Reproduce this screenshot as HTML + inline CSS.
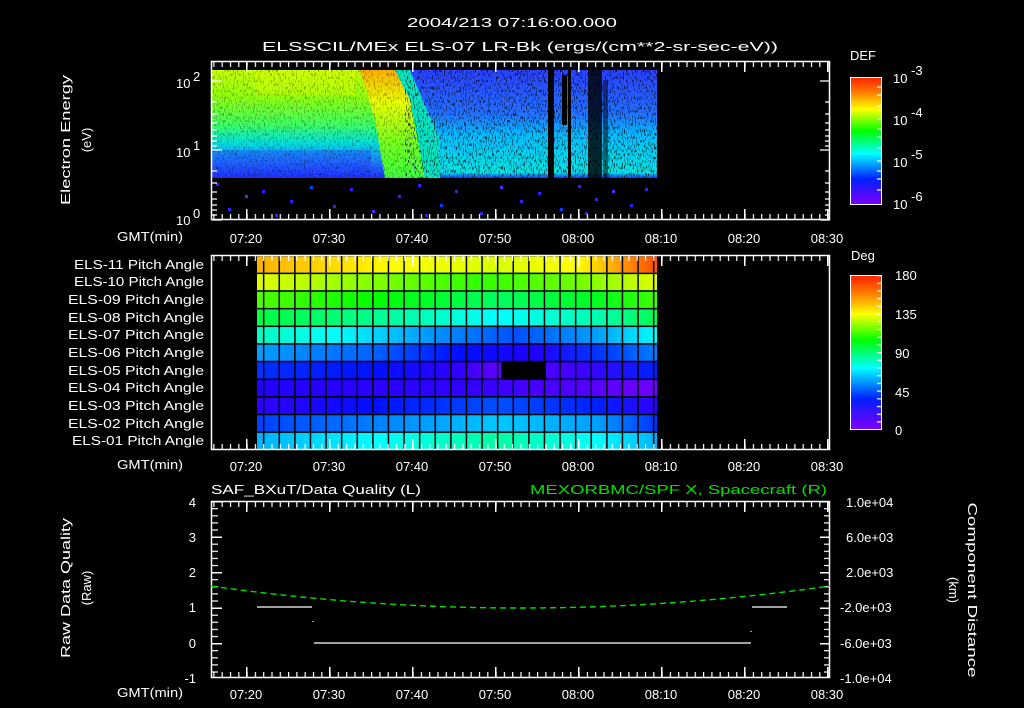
<!DOCTYPE html>
<html><head><meta charset="utf-8"><style>
html,body{margin:0;padding:0;background:#000;width:1024px;height:708px;overflow:hidden}
svg{display:block}
text{font-family:"Liberation Sans",sans-serif;fill:#fff;font-size:13px}
</style></head><body>
<svg width="1024" height="708" viewBox="0 0 1024 708" xmlns="http://www.w3.org/2000/svg">
<defs>
<linearGradient id="cb" x1="0" y1="0" x2="0" y2="1">
<stop offset="0" stop-color="#ff2000"/><stop offset="0.12" stop-color="#ff8000"/><stop offset="0.25" stop-color="#ffff00"/><stop offset="0.42" stop-color="#00ff00"/><stop offset="0.6" stop-color="#00ffff"/><stop offset="0.8" stop-color="#0020ff"/><stop offset="1" stop-color="#8000ff"/>
</linearGradient>
<linearGradient id="lg" x1="0" y1="0" x2="0" y2="1">
<stop offset="0" stop-color="#c8ff00"/><stop offset="0.25" stop-color="#90ff10"/><stop offset="0.5" stop-color="#40ff60"/><stop offset="0.68" stop-color="#00e0e0"/><stop offset="0.85" stop-color="#2080ff"/><stop offset="1" stop-color="#2030ff"/>
</linearGradient>
<linearGradient id="rg" x1="0" y1="0" x2="0" y2="1">
<stop offset="0" stop-color="#2840ff"/><stop offset="0.4" stop-color="#2070ff"/><stop offset="0.6" stop-color="#00c0ff"/><stop offset="0.95" stop-color="#00e8e0"/><stop offset="1" stop-color="#2030ff"/>
</linearGradient>
<linearGradient id="yb" x1="0" y1="0" x2="0" y2="1">
<stop offset="0" stop-color="#ffb000"/><stop offset="0.3" stop-color="#e8ff00"/><stop offset="0.7" stop-color="#70ff20"/><stop offset="1" stop-color="#40ff40"/>
</linearGradient>
<filter id="nz" x="0" y="0" width="1" height="1">
<feTurbulence type="fractalNoise" baseFrequency="0.9 0.3" numOctaves="1" seed="4"/>
<feColorMatrix type="matrix" values="0 0 0 0 0  0 0 0 0 0  0 0 0 0 0  10 0 0 0 -5.5"/>
</filter>
<filter id="nz2" x="0" y="0" width="1" height="1">
<feTurbulence type="fractalNoise" baseFrequency="0.9 0.25" numOctaves="1" seed="9"/>
<feColorMatrix type="matrix" values="0 0 0 0 0.1  0 0 0 0 0.1  0 0 0 0 1  8 0 0 0 -4.8"/>
</filter>
<pattern id="tmin" patternUnits="userSpaceOnUse" x="246.5" y="0" width="8.3" height="708"><rect x="0" y="0" width="1.2" height="708" fill="#fff"/></pattern>
<pattern id="tmaj" patternUnits="userSpaceOnUse" x="246" y="0" width="83" height="708"><rect x="0" y="0" width="1.5" height="708" fill="#fff"/></pattern>
<pattern id="grid" patternUnits="userSpaceOnUse" x="278.5" y="255" width="15.6" height="17.64"><rect x="0" y="0" width="1.5" height="17.64" fill="#000"/><rect x="0" y="0" width="15.6" height="1.5" fill="#000"/></pattern>
<pattern id="ymin" patternUnits="userSpaceOnUse" x="0" y="501" width="10" height="7.1"><rect x="0" y="0" width="10" height="1.2" fill="#fff"/></pattern>
<pattern id="ymaj" patternUnits="userSpaceOnUse" x="0" y="501" width="10" height="35.5"><rect x="0" y="0" width="10" height="1.5" fill="#fff"/></pattern>
<pattern id="cbt" patternUnits="userSpaceOnUse" x="0" y="275" width="10" height="7.7"><rect x="0" y="0" width="10" height="1.2" fill="#fff"/></pattern>
</defs>

<text x="512" y="27" text-anchor="middle" font-size="15" textLength="210" lengthAdjust="spacingAndGlyphs">2004/213 07:16:00.000</text>
<text x="520" y="51" text-anchor="middle" font-size="15" textLength="516" lengthAdjust="spacingAndGlyphs">ELSSCIL/MEx ELS-07 LR-Bk  (ergs/(cm**2-sr-sec-eV))</text>

<!-- TOP PANEL -->
<rect x="211" y="70" width="180" height="108" fill="url(#lg)"/>
<rect x="405" y="70" width="252" height="108" fill="url(#rg)"/>
<polygon points="360,70 400,70 415,100 430,178 385,178 375,120" fill="url(#yb)"/>
<polygon points="395,70 410,70 440,140 440,178 425,178 410,100" fill="#00e8c0"/>
<rect x="255" y="70" width="100" height="25" fill="#e0ff00" opacity="0.35"/>
<rect x="211" y="150" width="160" height="28" fill="#2030ff" opacity="0.35"/>
<rect x="211" y="70" width="200" height="108" filter="url(#nz)" opacity="0.3"/>
<rect x="405" y="70" width="252" height="108" filter="url(#nz)" opacity="0.7"/>
<rect x="405" y="70" width="252" height="108" filter="url(#nz2)" opacity="0.6"/>
<rect x="548" y="70" width="6" height="108" fill="#000"/>
<rect x="562" y="75" width="5" height="50" fill="#000"/>
<rect x="568" y="70" width="3" height="108" fill="#000"/>
<rect x="588" y="70" width="14" height="108" fill="#000" opacity="0.8"/>
<rect x="603" y="80" width="5" height="98" fill="#000" opacity="0.5"/>
<g fill="#3020ff">
<rect x="216" y="183" width="3" height="3"/><rect x="245" y="195" width="3" height="3" fill="#6020ff"/><rect x="262" y="190" width="3" height="3"/><rect x="290" y="200" width="3" height="3"/><rect x="310" y="186" width="3" height="3" fill="#0040ff"/><rect x="333" y="205" width="3" height="3"/><rect x="350" y="188" width="3" height="3"/><rect x="372" y="210" width="3" height="3" fill="#6020ff"/><rect x="398" y="195" width="3" height="3"/><rect x="418" y="184" width="3" height="3"/><rect x="440" y="204" width="3" height="3" fill="#0040ff"/><rect x="455" y="190" width="3" height="3"/><rect x="480" y="212" width="3" height="3"/><rect x="500" y="186" width="3" height="3" fill="#6020ff"/><rect x="520" y="200" width="3" height="3"/><rect x="538" y="192" width="3" height="3"/><rect x="560" y="208" width="3" height="3" fill="#0040ff"/><rect x="578" y="185" width="3" height="3"/><rect x="595" y="198" width="3" height="3"/><rect x="612" y="190" width="3" height="3" fill="#6020ff"/><rect x="630" y="204" width="3" height="3"/><rect x="645" y="188" width="3" height="3"/><rect x="228" y="208" width="3" height="3"/><rect x="275" y="214" width="3" height="3"/><rect x="425" y="214" width="3" height="3"/><rect x="585" y="212" width="3" height="3"/>
</g>
<rect x="211.5" y="61.5" width="618" height="158" fill="none" stroke="#fff" stroke-width="1.5"/>
<rect x="211" y="62" width="619" height="5" fill="url(#tmin)"/>
<rect x="211" y="62" width="619" height="10" fill="url(#tmaj)"/>
<rect x="211" y="214" width="619" height="5" fill="url(#tmin)"/>
<rect x="211" y="209" width="619" height="10" fill="url(#tmaj)"/>
<g stroke="#fff" stroke-width="1.2">
<path d="M212 81h10M212 150h10M212 220h10M820 81h10M820 150h10M820 220h10"/>
<path d="M212 102h5M212 114h5M212 123h5M212 130h5M212 136h5M212 141h5M212 146h5M212 171h5M212 183h5M212 192h5M212 199h5M212 205h5M212 210h5M212 215h5"/>
<path d="M825 102h5M825 114h5M825 123h5M825 130h5M825 136h5M825 141h5M825 146h5M825 171h5M825 183h5M825 192h5M825 199h5M825 205h5M825 210h5M825 215h5"/>
</g>
<text x="176" y="88" font-size="15">10</text><text x="193" y="81" font-size="11">2</text>
<text x="176" y="157" font-size="15">10</text><text x="193" y="150" font-size="11">1</text>
<text x="176" y="225" font-size="15">10</text><text x="193" y="218" font-size="11">0</text>
<text transform="translate(70,140) rotate(-90)" text-anchor="middle" font-size="14" textLength="130" lengthAdjust="spacingAndGlyphs">Electron Energy</text>
<text transform="translate(91,140) rotate(-90)" text-anchor="middle" font-size="14">(eV)</text>
<text x="117" y="241" font-size="13" textLength="66" lengthAdjust="spacingAndGlyphs">GMT(min)</text>
<g font-size="13" text-anchor="middle">
<text x="246" y="243">07:20</text><text x="329" y="243">07:30</text><text x="412" y="243">07:40</text><text x="495" y="243">07:50</text><text x="578" y="243">08:00</text><text x="661" y="243">08:10</text><text x="744" y="243">08:20</text><text x="827" y="243">08:30</text>
</g>
<text x="850" y="60" font-size="15">DEF</text>
<rect x="850.5" y="77.5" width="31" height="127" fill="url(#cb)" stroke="#fff" stroke-width="1"/>
<g stroke="#fff" stroke-width="1.2"><path d="M877 87h5M877 95h5M877 106h5M877 119h5M877 129h5M877 137h5M877 148h5M877 161h5M877 171h5M877 179h5M877 190h5"/></g>
<g font-size="15"><text x="893" y="83">10</text><text x="911" y="75" font-size="11">-3</text>
<text x="893" y="125">10</text><text x="911" y="117" font-size="11">-4</text>
<text x="893" y="167">10</text><text x="911" y="159" font-size="11">-5</text>
<text x="893" y="209">10</text><text x="911" y="201" font-size="11">-6</text></g>

<!-- MIDDLE PANEL -->
<defs>
<linearGradient id="r1"><stop offset="0" stop-color="#ffb000"/><stop offset="0.35" stop-color="#ffff00"/><stop offset="0.6" stop-color="#d8ff00"/><stop offset="0.8" stop-color="#ffff00"/><stop offset="0.92" stop-color="#ff9000"/><stop offset="1" stop-color="#ff5000"/></linearGradient>
<linearGradient id="r2"><stop offset="0" stop-color="#e0ff00"/><stop offset="0.3" stop-color="#80ff00"/><stop offset="0.55" stop-color="#30ff00"/><stop offset="0.8" stop-color="#70ff00"/><stop offset="1" stop-color="#e0ff00"/></linearGradient>
<linearGradient id="r3"><stop offset="0" stop-color="#50ff00"/><stop offset="0.3" stop-color="#00ff00"/><stop offset="0.6" stop-color="#00ff60"/><stop offset="0.85" stop-color="#00ff20"/><stop offset="1" stop-color="#40ff00"/></linearGradient>
<linearGradient id="r4"><stop offset="0" stop-color="#00ff40"/><stop offset="0.3" stop-color="#00ff90"/><stop offset="0.6" stop-color="#00ffff"/><stop offset="0.85" stop-color="#00ffb0"/><stop offset="1" stop-color="#00ff50"/></linearGradient>
<linearGradient id="r5"><stop offset="0" stop-color="#00ffc0"/><stop offset="0.2" stop-color="#00ffff"/><stop offset="0.45" stop-color="#0090ff"/><stop offset="0.65" stop-color="#0050ff"/><stop offset="0.85" stop-color="#00a0ff"/><stop offset="1" stop-color="#00ffff"/></linearGradient>
<linearGradient id="r6"><stop offset="0" stop-color="#00a0ff"/><stop offset="0.3" stop-color="#0060ff"/><stop offset="0.5" stop-color="#0010ff"/><stop offset="0.7" stop-color="#2000ff"/><stop offset="0.88" stop-color="#0040ff"/><stop offset="1" stop-color="#0080ff"/></linearGradient>
<linearGradient id="r7"><stop offset="0" stop-color="#0030ff"/><stop offset="0.3" stop-color="#0010ff"/><stop offset="0.5" stop-color="#3000ff"/><stop offset="0.6" stop-color="#6000ff"/><stop offset="0.8" stop-color="#4000ff"/><stop offset="1" stop-color="#0020ff"/></linearGradient>
<linearGradient id="r8"><stop offset="0" stop-color="#2000ff"/><stop offset="0.5" stop-color="#3000ff"/><stop offset="0.8" stop-color="#5000ff"/><stop offset="1" stop-color="#7000ff"/></linearGradient>
<linearGradient id="r9"><stop offset="0" stop-color="#3000ff"/><stop offset="0.3" stop-color="#0010ff"/><stop offset="0.6" stop-color="#0050ff"/><stop offset="0.85" stop-color="#0020ff"/><stop offset="1" stop-color="#3000ff"/></linearGradient>
<linearGradient id="r10"><stop offset="0" stop-color="#0040ff"/><stop offset="0.3" stop-color="#0080ff"/><stop offset="0.6" stop-color="#00c8ff"/><stop offset="0.85" stop-color="#00a0ff"/><stop offset="1" stop-color="#0030ff"/></linearGradient>
<linearGradient id="r11"><stop offset="0" stop-color="#00b0ff"/><stop offset="0.3" stop-color="#00ffff"/><stop offset="0.6" stop-color="#00ffa0"/><stop offset="0.85" stop-color="#00ffff"/><stop offset="1" stop-color="#00b0ff"/></linearGradient>
</defs>
<rect x="257" y="255" width="400" height="17.7" fill="url(#r1)"/>
<rect x="257" y="272.6" width="400" height="17.7" fill="url(#r2)"/>
<rect x="257" y="290.3" width="400" height="17.7" fill="url(#r3)"/>
<rect x="257" y="307.9" width="400" height="17.7" fill="url(#r4)"/>
<rect x="257" y="325.6" width="400" height="17.7" fill="url(#r5)"/>
<rect x="257" y="343.2" width="400" height="17.7" fill="url(#r6)"/>
<rect x="257" y="360.8" width="400" height="17.7" fill="url(#r7)"/>
<rect x="257" y="378.5" width="400" height="17.7" fill="url(#r8)"/>
<rect x="257" y="396.1" width="400" height="17.7" fill="url(#r9)"/>
<rect x="257" y="413.8" width="400" height="17.7" fill="url(#r10)"/>
<rect x="257" y="431.4" width="400" height="17.7" fill="url(#r11)"/>
<rect x="501" y="361" width="45" height="17.5" fill="#000"/>
<rect x="257" y="255" width="400" height="195" fill="url(#grid)"/>
<rect x="211.5" y="255.5" width="618" height="194" fill="none" stroke="#fff" stroke-width="1.5"/>
<rect x="211" y="256" width="619" height="5" fill="url(#tmin)"/>
<rect x="211" y="256" width="619" height="10" fill="url(#tmaj)"/>
<rect x="211" y="444" width="619" height="5" fill="url(#tmin)"/>
<rect x="211" y="439" width="619" height="10" fill="url(#tmaj)"/>
<g font-size="12.5" text-anchor="end">
<text x="204" y="269" textLength="130" lengthAdjust="spacingAndGlyphs">ELS-11 Pitch Angle</text>
<text x="204" y="286" textLength="130" lengthAdjust="spacingAndGlyphs">ELS-10 Pitch Angle</text>
<text x="204" y="304" textLength="136" lengthAdjust="spacingAndGlyphs">ELS-09 Pitch Angle</text>
<text x="204" y="322" textLength="136" lengthAdjust="spacingAndGlyphs">ELS-08 Pitch Angle</text>
<text x="204" y="339" textLength="136" lengthAdjust="spacingAndGlyphs">ELS-07 Pitch Angle</text>
<text x="204" y="357" textLength="136" lengthAdjust="spacingAndGlyphs">ELS-06 Pitch Angle</text>
<text x="204" y="375" textLength="136" lengthAdjust="spacingAndGlyphs">ELS-05 Pitch Angle</text>
<text x="204" y="392" textLength="136" lengthAdjust="spacingAndGlyphs">ELS-04 Pitch Angle</text>
<text x="204" y="410" textLength="136" lengthAdjust="spacingAndGlyphs">ELS-03 Pitch Angle</text>
<text x="204" y="428" textLength="136" lengthAdjust="spacingAndGlyphs">ELS-02 Pitch Angle</text>
<text x="204" y="445" textLength="132" lengthAdjust="spacingAndGlyphs">ELS-01 Pitch Angle</text>
</g>
<text x="117" y="469" font-size="13" textLength="66" lengthAdjust="spacingAndGlyphs">GMT(min)</text>
<g font-size="13" text-anchor="middle">
<text x="246" y="471">07:20</text><text x="329" y="471">07:30</text><text x="412" y="471">07:40</text><text x="495" y="471">07:50</text><text x="578" y="471">08:00</text><text x="661" y="471">08:10</text><text x="744" y="471">08:20</text><text x="827" y="471">08:30</text>
</g>
<text x="851" y="260" font-size="15">Deg</text>
<rect x="850.5" y="275.5" width="31" height="154" fill="url(#cb)" stroke="#fff" stroke-width="1"/>
<rect x="877" y="276" width="5" height="153" fill="url(#cbt)"/>
<g font-size="15"><text x="895" y="280">180</text><text x="895" y="319">135</text><text x="895" y="358">90</text><text x="895" y="397">45</text><text x="895" y="435">0</text></g>

<!-- BOTTOM PANEL -->
<text x="211" y="494" font-size="15" textLength="210" lengthAdjust="spacingAndGlyphs">SAF_BXuT/Data Quality (L)</text>
<text x="530" y="494" font-size="15" style="fill:#00e000" textLength="297" lengthAdjust="spacingAndGlyphs">MEXORBMC/SPF X, Spacecraft (R)</text>
<rect x="211.5" y="501.5" width="618" height="176" fill="none" stroke="#fff" stroke-width="1.5"/>
<rect x="211" y="502" width="619" height="5" fill="url(#tmin)"/>
<rect x="211" y="502" width="619" height="10" fill="url(#tmaj)"/>
<rect x="211" y="672" width="619" height="5" fill="url(#tmin)"/>
<rect x="211" y="667" width="619" height="10" fill="url(#tmaj)"/>
<rect x="212" y="501" width="6" height="176" fill="url(#ymin)"/>
<rect x="212" y="501" width="10" height="176" fill="url(#ymaj)"/>
<rect x="824" y="501" width="6" height="176" fill="url(#ymin)"/>
<rect x="820" y="501" width="10" height="176" fill="url(#ymaj)"/>
<path d="M211 586 Q520 630 830 586" fill="none" stroke="#00e000" stroke-width="1.4" stroke-dasharray="6 4"/>
<g stroke="#fff" stroke-width="1.2">
<path d="M257 607h55M314 643h437M752 607h35M313 621v1M751 631v1"/>
</g>
<g font-size="13" text-anchor="end"><text x="196" y="507">4</text><text x="196" y="542">3</text><text x="196" y="577">2</text><text x="196" y="612">1</text><text x="196" y="648">0</text><text x="196" y="683">-1</text></g>
<g font-size="13"><text x="846" y="507">1.0e+04</text><text x="846" y="542">6.0e+03</text><text x="846" y="577">2.0e+03</text><text x="840" y="612">-2.0e+03</text><text x="840" y="648">-6.0e+03</text><text x="840" y="683">-1.0e+04</text></g>
<text transform="translate(70,588) rotate(-90)" text-anchor="middle" font-size="14" textLength="140" lengthAdjust="spacingAndGlyphs">Raw Data Quality</text>
<text transform="translate(91,588) rotate(-90)" text-anchor="middle" font-size="14">(Raw)</text>
<text transform="translate(968,590) rotate(90)" text-anchor="middle" font-size="14" textLength="175" lengthAdjust="spacingAndGlyphs">Component Distance</text>
<text transform="translate(949,590) rotate(90)" text-anchor="middle" font-size="14">(km)</text>
<text x="117" y="697" font-size="13" textLength="66" lengthAdjust="spacingAndGlyphs">GMT(min)</text>
<g font-size="13" text-anchor="middle">
<text x="246" y="699">07:20</text><text x="329" y="699">07:30</text><text x="412" y="699">07:40</text><text x="495" y="699">07:50</text><text x="578" y="699">08:00</text><text x="661" y="699">08:10</text><text x="744" y="699">08:20</text><text x="827" y="699">08:30</text>
</g>
</svg>
</body></html>
